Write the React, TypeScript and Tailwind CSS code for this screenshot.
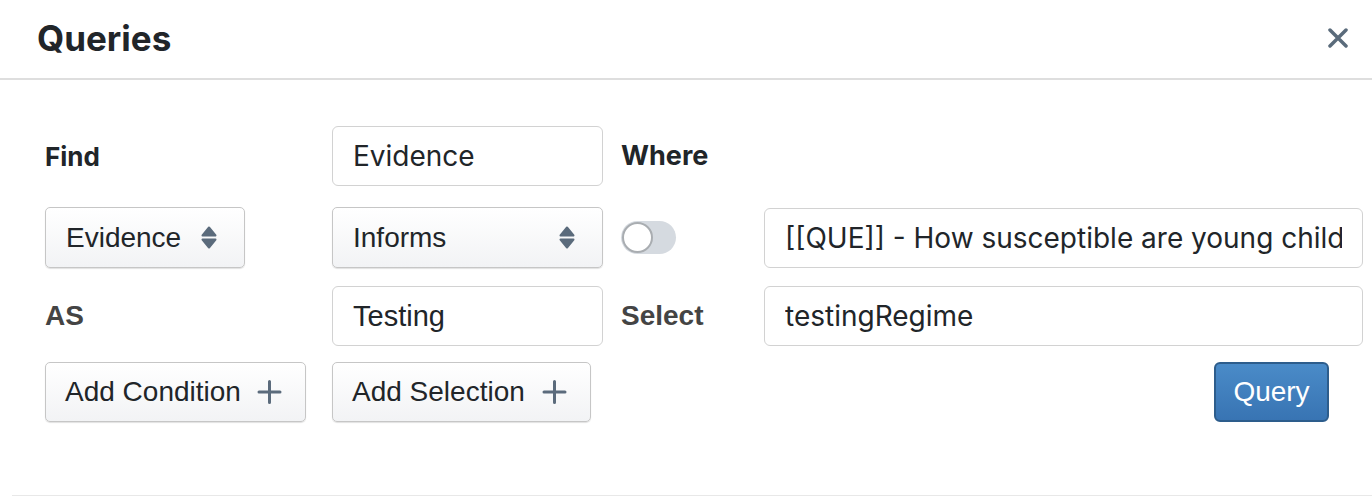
import React from 'react';

const inter = "font-['Inter','Noto_Sans',sans-serif]";
const arial = "font-['Liberation_Sans',Arial,sans-serif]";

function UpDown() {
  return (
    <svg width="16" height="24" viewBox="0 0 16 24" className="shrink-0">
      <polygon points="8,1.5 14.5,9.5 1.5,9.5" fill="#5b6b7c" stroke="#5b6b7c" strokeWidth="2" strokeLinejoin="round" />
      <polygon points="1.5,13.5 14.5,13.5 8,21.5" fill="#5b6b7c" stroke="#5b6b7c" strokeWidth="2" strokeLinejoin="round" />
    </svg>
  );
}

function Plus() {
  return (
    <svg width="25" height="24" viewBox="0 0 25 24" className="shrink-0">
      <path d="M12.5 1.5v21M2 12h21" stroke="#5b6b7c" strokeWidth="3" strokeLinecap="round" />
    </svg>
  );
}

function Select({ label, width }: { label: string; width: string }) {
  return (
    <div
      className={`${width} h-[61px] flex items-center justify-between pl-[20px] pr-[27px] rounded-[5px] border border-[#c6c6c6] bg-gradient-to-b from-white to-[#f2f3f5] shadow-[0_1px_1px_rgba(0,0,0,0.12)] ${arial} text-[28px] text-[#212529]`}
    >
      <span>{label}</span>
      <UpDown />
    </div>
  );
}

function TextInput({ value, width, font, size }: { value: string; width: string; font: string; size: string }) {
  return (
    <input
      readOnly
      value={value}
      className={`${width} h-[60px] px-[20px] rounded-[6px] border border-[#d2d2d2] bg-white ${font} ${size} text-[#212529] outline-none`}
    />
  );
}

function AddButton({ label, width }: { label: string; width: string }) {
  return (
    <button
      className={`${width} h-[60px] flex items-center justify-between pl-[19px] pr-[23px] rounded-[5px] border border-[#c6c6c6] bg-gradient-to-b from-white to-[#f2f3f5] shadow-[0_1px_1px_rgba(0,0,0,0.12)] ${arial} text-[28px] text-[#212529]`}
    >
      <span>{label}</span>
      <Plus />
    </button>
  );
}

const row = 'grid grid-cols-[287px_289px_143px_599px] items-center';

export default function App() {
  return (
    <div className="w-[1372px] h-[496px] bg-white flex flex-col">
      <div className="h-[80px] shrink-0 flex items-center justify-between pl-[37px] pr-[24px] border-b-2 border-[#dedede]">
        <h1 className={`${inter} text-[35px] font-bold text-[#212529] -mt-[2px]`}>Queries</h1>
        <svg width="20" height="20" viewBox="0 0 20 20" className="-mt-[2px]">
          <path d="M2 2l16 16M18 2L2 18" stroke="#5a6b7b" strokeWidth="3.5" strokeLinecap="round" />
        </svg>
      </div>

      <div className="flex-1 pl-[45px] pt-[46px]">
        <div className={`${row} h-[60px]`}>
          <span className={`${inter} text-[26px] font-bold text-[#212529]`}>Find</span>
          <TextInput value="Evidence" width="w-[271px]" font={inter} size="text-[28px]" />
          <span className={`${inter} text-[27px] font-bold text-[#212529]`}>Where</span>
          <div />
        </div>

        <div className={`${row} h-[61px] mt-[21px]`}>
          <Select label="Evidence" width="w-[200px]" />
          <Select label="Informs" width="w-[271px]" />
          <div className="w-[55px] h-[33px] rounded-full bg-[#d5dae0] flex items-center">
            <div className="w-[31px] h-[31px] rounded-full bg-white border-2 border-[#a9adb1] ml-[1px]" />
          </div>
          <TextInput
            value="[[QUE]] - How susceptible are young children to COVID-19?"
            width="w-[599px]"
            font={inter}
            size="text-[28px]"
          />
        </div>

        <div className={`${row} h-[60px] mt-[18px]`}>
          <span className={`${arial} text-[28px] font-bold text-[#444444]`}>AS</span>
          <TextInput value="Testing" width="w-[271px]" font={arial} size="text-[29px]" />
          <span className={`${arial} text-[28px] font-bold text-[#444444]`}>Select</span>
          <TextInput value="testingRegime" width="w-[599px]" font={inter} size="text-[28px]" />
        </div>

        <div className={`${row} h-[60px] mt-[16px]`}>
          <AddButton label="Add Condition" width="w-[261px]" />
          <AddButton label="Add Selection" width="w-[259px]" />
          <div />
          <div className="flex justify-end pr-[34px]">
            <button
              className={`w-[115px] h-[60px] rounded-[6px] border-2 border-[#2d5d8c] bg-gradient-to-b from-[#4a8bc8] to-[#3874b3] ${arial} text-[28px] text-white`}
            >
              Query
            </button>
          </div>
        </div>
      </div>

      <div className="ml-[12px] h-[1px] bg-[#e8e8e8] shrink-0" />
    </div>
  );
}
